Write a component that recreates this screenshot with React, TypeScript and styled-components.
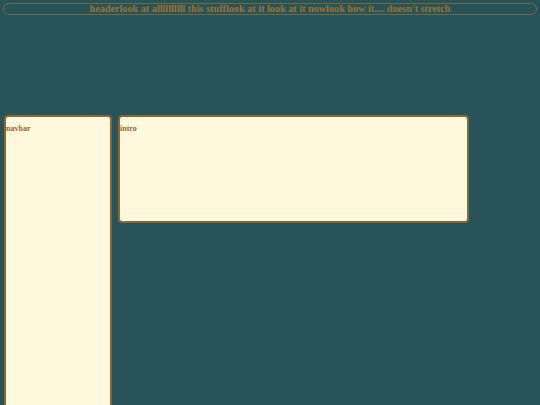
import React from 'react'
import styled, { createGlobalStyle } from 'styled-components'

const GlobalStyle = createGlobalStyle`
  html, body {
    margin: 0;
    padding: 0;
    background: #275458;
    font-family: "Liberation Serif", "Times New Roman", serif;
  }
`

const Page = styled.div`
  display: grid;
  grid-template-columns: 108px 351px 1fr;
  grid-template-rows: 12px 100px 108px 200px;
  column-gap: 6px;
  padding: 3px 3px 0 4px;
  height: 405px;
  box-sizing: border-box;
  overflow: hidden;
`

const Header = styled.header`
  grid-column: 1 / -1;
  grid-row: 1;
  margin-left: -1px;
  border: 1px solid #76683f;
  border-radius: 7px;
  box-sizing: border-box;
  display: flex;
  align-items: center;
  justify-content: center;
  color: #a0702e;
  font-weight: bold;
  font-size: 10.2px;
  line-height: 10px;
  white-space: nowrap;
`

const Card = styled.div<{ $row: string; $col: string }>`
  grid-row: ${p => p.$row};
  grid-column: ${p => p.$col};
  background: #fff8dc;
  border: 2px solid #8b6532;
  border-radius: 4px;
  box-sizing: border-box;
  padding: 7px 0 0 0;
  color: #9b6530;
  font-weight: bold;
  font-size: 8px;
`

export default function App() {
  return (
    <>
      <GlobalStyle />
      <Page>
        <Header>headerlook at allllllllll this stufflook at it look at it nowlook how it.... doesn't stretch</Header>
        <Card $row="3 / 5" $col="1">navbar</Card>
        <Card $row="3" $col="2">intro</Card>
      </Page>
    </>
  )
}
